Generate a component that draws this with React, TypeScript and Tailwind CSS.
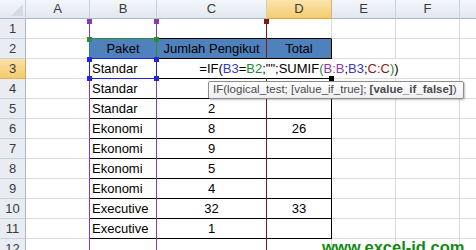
import React from "react";

const COLS = ["A", "B", "C", "D", "E", "F", "G"];

type Row = { b?: string; c?: string; d?: string };
const DATA: Record<number, Row> = {
  2: { b: "Paket", c: "Jumlah Pengikut", d: "Total" },
  3: { b: "Standar" },
  4: { b: "Standar" },
  5: { b: "Standar", c: "2" },
  6: { b: "Ekonomi", c: "8", d: "26" },
  7: { b: "Ekonomi", c: "9" },
  8: { b: "Ekonomi", c: "5" },
  9: { b: "Ekonomi", c: "4" },
  10: { b: "Executive", c: "32", d: "33" },
  11: { b: "Executive", c: "1" },
};

function Cell({ r, c }: { r: number; c: number }) {
  const col = COLS[c];
  const inTable = r >= 2 && r <= 11 && c >= 1 && c <= 3;
  const header = r === 2 && c >= 1 && c <= 3;
  let cls = "relative border-r border-b text-[13px] leading-[19px] text-black overflow-visible whitespace-nowrap";
  cls += header ? " bg-[#4f81bd] text-center" : " bg-white";
  const blackBottom = inTable || (r === 1 && c >= 1 && c <= 3);
  const blackRight = inTable && c === 3;
  cls += blackBottom ? " border-b-black" : " border-b-[#dadcdd]";
  cls += blackRight ? " border-r-black" : " border-r-[#dadcdd]";
  const row = DATA[r] || {};
  let text: string | undefined;
  if (col === "B") text = row.b;
  if (col === "C") text = row.c;
  if (col === "D") text = row.d;
  if (!header) cls += col === "B" ? " pl-[2px]" : " text-center";
  return (
    <div className={cls}>
      {text}
      {r === 3 && col === "D" && (
        <div className="absolute left-1/2 top-0 z-20 h-[19px] -translate-x-1/2 bg-white px-[1px] leading-[19px]">
          <span>=IF(</span>
          <span className="text-[#3a3ac0]">B3</span>
          <span>=</span>
          <span className="text-[#1f8a2f]">B2</span>
          <span>;"";SUMIF</span>
          <span className="text-[#1f8a2f]">(</span>
          <span className="text-[#8b3aa8]">B:B</span>
          <span>;</span>
          <span className="text-[#3a3ac0]">B3</span>
          <span>;</span>
          <span className="text-[#8b1a1a]">C:C</span>
          <span className="text-[#1f8a2f]">)</span>
          <span>)</span>
        </div>
      )}
    </div>
  );
}

function ColHeader({ c }: { c: number }) {
  const sel = COLS[c] === "D";
  return (
    <div
      className={
        "flex items-center justify-center border-r border-b text-[13px] text-[#3a3a3a] " +
        (sel
          ? "bg-gradient-to-b from-[#fbe4ae] to-[#f5cc6e] border-r-[#e0b35a] border-b-[#d9a441]"
          : "bg-gradient-to-b from-[#f3f6fa] to-[#e2e8f0] border-r-[#c8d0da] border-b-[#a9b7c9]")
      }
    >
      {COLS[c]}
    </div>
  );
}

function RowHeader({ r }: { r: number }) {
  const sel = r === 3;
  return (
    <div
      className={
        "flex items-center justify-center border-r border-b text-[13px] text-[#3a3a3a] " +
        (sel
          ? "bg-gradient-to-b from-[#fbe1a6] to-[#f5cc6e] border-r-[#d9a441] border-b-[#e0b35a]"
          : "bg-[#e9edf3] border-r-[#a9b7c9] border-b-[#c8d0da]")
      }
    >
      {r}
    </div>
  );
}

function Handle({ x, y, color }: { x: number; y: number; color: string }) {
  return (
    <div
      className={"absolute z-10 h-[5px] w-[5px] " + color}
      style={{ left: x - 2, top: y - 2 }}
    />
  );
}

export default function App() {
  const rows = Array.from({ length: 12 }, (_, i) => i + 1);
  return (
    <div className="relative h-[250px] w-[476px] overflow-hidden bg-white font-['Liberation_Sans',Arial,sans-serif]">
      <div className="grid grid-cols-[26px_64px_67px_110px_65px_64px_64px_64px] grid-rows-[19px_repeat(12,20px)]">
        <div className="relative border-r border-b border-r-[#c8d0da] border-b-[#a9b7c9] bg-gradient-to-b from-[#f3f6fa] to-[#e2e8f0]">
          <svg className="absolute left-[11px] top-[4px]" width="12" height="12" viewBox="0 0 12 12">
            <polygon points="12,0 12,12 0,12" fill="#d5dbe3" />
          </svg>
        </div>
        {COLS.map((_, c) => (
          <ColHeader key={c} c={c} />
        ))}
        {rows.map((r) => (
          <React.Fragment key={r}>
            <RowHeader r={r} />
            {COLS.map((_, c) => (
              <Cell key={c} r={r} c={c} />
            ))}
          </React.Fragment>
        ))}
      </div>

      {/* Range highlight: C:C (dark red) */}
      <div className="absolute left-[266px] top-[19px] z-10 h-[240px] w-[1px] bg-[#7a1c1c]" />
      <Handle x={266} y={21} color="bg-[#7a1c1c]" />
      {/* Range highlight: B:B (purple) */}
      <div className="absolute left-[89px] top-[19px] z-10 h-[240px] w-[1px] bg-[#8b3aa8]" />
      <div className="absolute left-[156px] top-[19px] z-10 h-[240px] w-[1px] bg-[#8b3aa8]" />
      <Handle x={89} y={21} color="bg-[#8b3aa8]" />
      <Handle x={156} y={21} color="bg-[#8b3aa8]" />
      {/* B2 green */}
      <div className="absolute left-[89px] top-[38px] z-10 h-[21px] w-[68px] border border-[#2e8b3e]" />
      <Handle x={89} y={39} color="bg-[#2e8b3e]" />
      <Handle x={156} y={39} color="bg-[#2e8b3e]" />
      {/* B3 blue */}
      <div className="absolute left-[89px] top-[58px] z-10 h-[21px] w-[68px] border border-[#2424d8]" />
      <Handle x={89} y={59} color="bg-[#2424d8]" />
      <Handle x={156} y={59} color="bg-[#2424d8]" />
      <Handle x={89} y={78} color="bg-[#2424d8]" />
      <Handle x={156} y={78} color="bg-[#2424d8]" />

      {/* fill handle */}
      <div className="absolute left-[329px] top-[76px] z-20 h-[5px] w-[5px] bg-black" />

      {/* Tooltip */}
      <div className="absolute left-[208px] top-[81px] z-30 flex h-[18px] w-[256px] items-center rounded-[2px] border border-[#8c8c8c] bg-gradient-to-b from-white to-[#eeeef3] pl-[4px] text-[11.5px] text-[#4a4a4a] shadow-[1px_1px_2px_rgba(0,0,0,0.25)] whitespace-nowrap">
        <span>IF(logical_test; [value_if_true];&nbsp;</span>
        <span className="font-bold">[value_if_false]</span>
        <span>)</span>
      </div>

      {/* Watermark */}
      <div className="absolute left-[322px] top-[239px] z-30 text-[16.5px] font-bold leading-none text-[#118a11]">
        www.excel-id.com
      </div>
    </div>
  );
}
